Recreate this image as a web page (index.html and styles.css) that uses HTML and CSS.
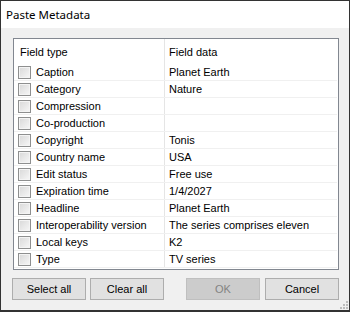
FILE: index.html
```html
<!DOCTYPE html>
<html lang="en">
<head>
    <meta charset="UTF-8">
    <title>Paste Metadata</title>
    <link rel="stylesheet" href="styles.css">
</head>
<body>
    <div class="window">
        <div class="titlebar">Paste Metadata</div>
        <div class="content">
            <div class="list">
                <div class="row head">
                    <div class="cell type">Field type</div>
                    <div class="cell data">Field data</div>
                </div>
                <div class="row"><div class="cell type"><span class="check"></span>Caption</div><div class="cell data">Planet Earth</div></div>
                <div class="row"><div class="cell type"><span class="check"></span>Category</div><div class="cell data">Nature</div></div>
                <div class="row"><div class="cell type"><span class="check"></span>Compression</div><div class="cell data"></div></div>
                <div class="row"><div class="cell type"><span class="check"></span>Co-production</div><div class="cell data"></div></div>
                <div class="row"><div class="cell type"><span class="check"></span>Copyright</div><div class="cell data">Tonis</div></div>
                <div class="row"><div class="cell type"><span class="check"></span>Country name</div><div class="cell data">USA</div></div>
                <div class="row"><div class="cell type"><span class="check"></span>Edit status</div><div class="cell data">Free use</div></div>
                <div class="row"><div class="cell type"><span class="check"></span>Expiration time</div><div class="cell data">1/4/2027</div></div>
                <div class="row"><div class="cell type"><span class="check"></span>Headline</div><div class="cell data">Planet Earth</div></div>
                <div class="row"><div class="cell type"><span class="check"></span>Interoperability version</div><div class="cell data">The series comprises eleven</div></div>
                <div class="row"><div class="cell type"><span class="check"></span>Local keys</div><div class="cell data">K2</div></div>
                <div class="row"><div class="cell type"><span class="check"></span>Type</div><div class="cell data">TV series</div></div>
            </div>
            <div class="buttons">
                <button class="btn">Select all</button>
                <button class="btn">Clear all</button>
                <button class="btn push" disabled>OK</button>
                <button class="btn">Cancel</button>
            </div>
        </div>
        <svg class="grip" width="8" height="8" viewBox="0 0 8 8">
            <rect x="6" y="0" width="2" height="2" fill="#bcbcbc"/>
            <rect x="3" y="3" width="2" height="2" fill="#bcbcbc"/>
            <rect x="6" y="3" width="2" height="2" fill="#bcbcbc"/>
            <rect x="0" y="6" width="2" height="2" fill="#bcbcbc"/>
            <rect x="3" y="6" width="2" height="2" fill="#bcbcbc"/>
            <rect x="6" y="6" width="2" height="2" fill="#bcbcbc"/>
        </svg>
    </div>
</body>
</html>
```

FILE: styles.css
```css
body, html {
    margin: 0;
    padding: 0;
    background-color: #ffffff;
    font-family: 'Liberation Sans', Arial, sans-serif;
    font-size: 11px;
    color: #000000;
}
.window {
    position: relative;
    box-sizing: border-box;
    width: 350px;
    height: 312px;
    border: 1px solid #333333;
    border-bottom-width: 2px;
    display: flex;
    flex-direction: column;
    background-color: #f0f0f0;
}
.titlebar {
    height: 27px;
    line-height: 27px;
    padding-left: 5px;
    background-color: #ffffff;
    font-family: 'Noto Sans', sans-serif;
    font-size: 11.5px;
}
.content {
    flex: 1;
    display: flex;
    flex-direction: column;
    padding: 10px 10px 10px 11px;
}
.list {
    flex: 1;
    margin-left: 1px;
    border: 1px solid #828790;
    background-color: #ffffff;
    overflow: hidden;
}
.row {
    display: grid;
    grid-template-columns: 150px 1fr;
    height: 16px;
    border-bottom: 1px solid #f0f0f0;
    margin-right: 1px;
}
.row.head {
    height: 25px;
    border-bottom: none;
}
.cell {
    display: flex;
    align-items: center;
    white-space: nowrap;
    overflow: hidden;
}
.cell.type {
    padding-left: 4px;
}
.cell.data {
    border-left: 1px solid #e5e5e5;
    padding-left: 4px;
}
.head .cell.type {
    padding-left: 6px;
}
.check {
    box-sizing: border-box;
    width: 13px;
    height: 13px;
    margin-right: 5px;
    border: 1px solid #8e8f8f;
    background: linear-gradient(135deg, #d8d8d8, #f7f7f7);
    box-shadow: inset 0 0 0 1px #f4f4f4;
    flex-shrink: 0;
}
.buttons {
    display: flex;
    gap: 4px;
    margin-top: 8px;
}
.btn {
    width: 74px;
    height: 22px;
    padding: 0;
    border: 1px solid #adadad;
    background-color: #e1e1e1;
    font-family: 'Liberation Sans', Arial, sans-serif;
    font-size: 11px;
    color: #000000;
}
.btn.push {
    margin-left: auto;
    margin-right: 1px;
}
.btn:disabled {
    background-color: #cccccc;
    border-color: #bfbfbf;
    color: #838383;
}
.grip {
    position: absolute;
    right: 1px;
    bottom: 1px;
}
```
